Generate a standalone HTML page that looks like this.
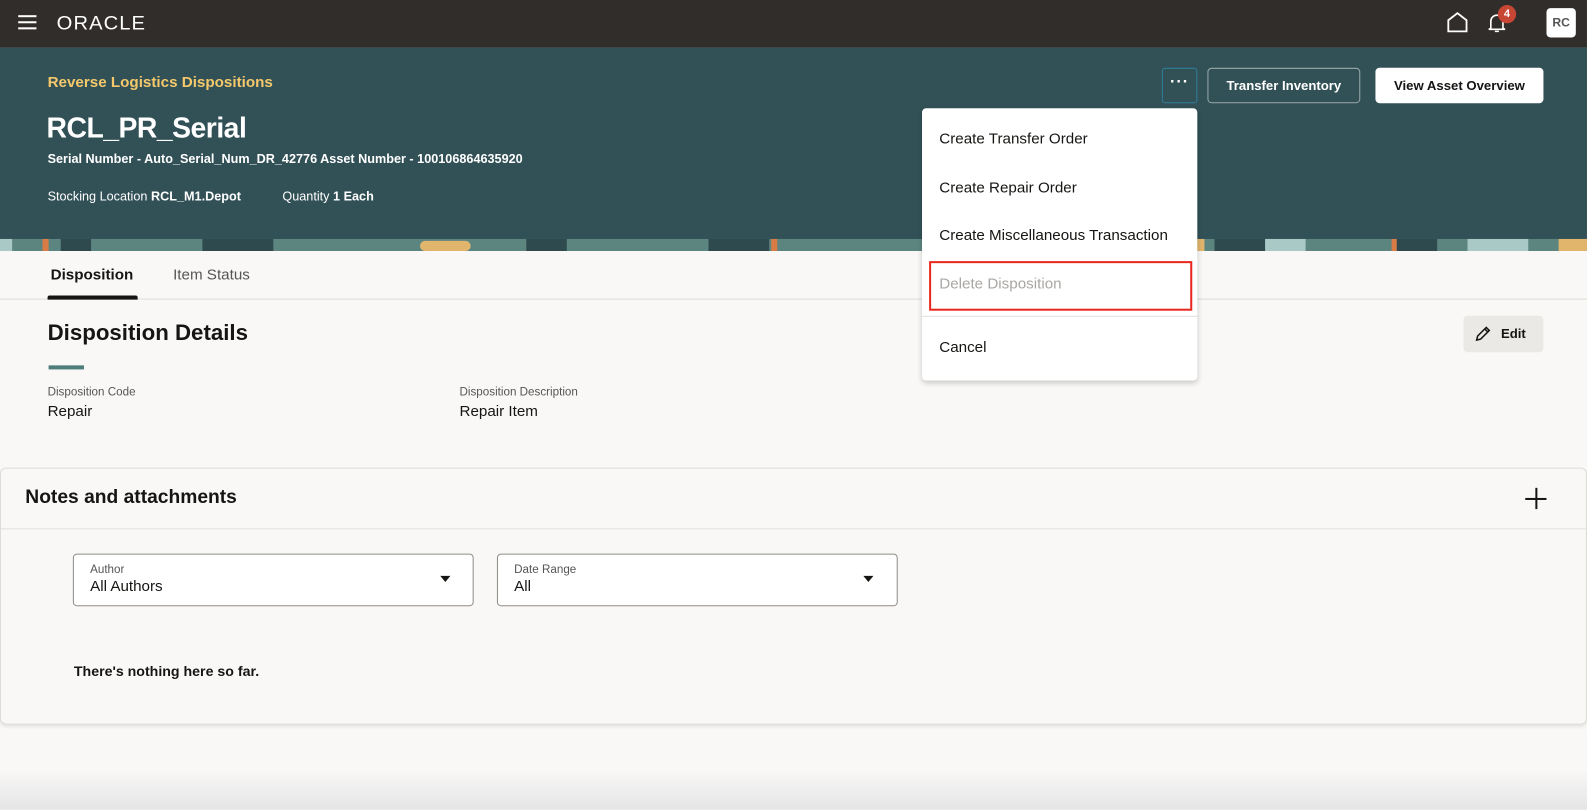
<!DOCTYPE html>
<html><head><style>
*{margin:0;padding:0;box-sizing:border-box}
body{width:1587px;height:810px;overflow:hidden;background:#f9f8f6;font-family:"Liberation Sans",sans-serif;color:#161513;position:relative}
#w{position:absolute;left:0;top:0;width:1568px;height:800px;transform:scale(1.0121);transform-origin:0 0}
.a{position:absolute;white-space:nowrap}
</style></head><body><div id="w">
<div class="a" style="left:0;top:0;width:1568px;height:47px;background:#312d2a"></div>
<div class="a" style="left:18px;top:15px;width:18px;height:2px;background:#fff;box-shadow:0 6px 0 #fff,0 12px 0 #fff"></div>
<div class="a" style="left:56px;top:13px;color:#fff;font-size:19px;letter-spacing:1px;transform:scaleX(1.05);transform-origin:0 0">ORACLE</div>
<svg class="a" style="left:1428px;top:10px" width="24" height="24" viewBox="0 0 24 24"><path d="M3 21V10L12 3l9 7v11z" fill="none" stroke="#fff" stroke-width="1.8"/></svg>
<svg class="a" style="left:1467px;top:10px" width="24" height="24" viewBox="0 0 24 24"><path d="M6 18V11a6 6 0 0112 0v7l2 1H4zM10 21h4" fill="none" stroke="#fff" stroke-width="1.6"/></svg>
<div class="a" style="left:1480px;top:5px;width:18px;height:18px;border-radius:9px;background:#c74634;color:#fff;font-size:11px;font-weight:bold;text-align:center;line-height:18px">4</div>
<div class="a" style="left:1528px;top:8px;width:29px;height:29px;border-radius:4px;background:#fff;color:#555;font-size:12px;font-weight:bold;text-align:center;line-height:29px">RC</div>

<div class="a" style="left:0;top:47px;width:1568px;height:190px;background:#325157"></div>
<svg class="a" style="left:0;top:236px" width="1568" height="12">
<rect width="1568" height="12" fill="#5d8580"/>
<g fill="#2e4a4e"><rect x="60" y="0" width="30" height="12"/><rect x="200" y="0" width="70" height="12"/><rect x="520" y="0" width="40" height="12"/><rect x="700" y="0" width="60" height="12"/><rect x="1200" y="0" width="50" height="12"/><rect x="1380" y="0" width="40" height="12"/></g>
<g fill="#a9c9c6"><rect x="0" y="0" width="12" height="12"/><rect x="1250" y="0" width="40" height="12"/><rect x="1450" y="0" width="60" height="12"/></g>
<g fill="#e1b56b"><rect x="415" y="2" width="50" height="10" rx="5"/><rect x="1005" y="0" width="40" height="12"/><rect x="1180" y="0" width="10" height="12"/><rect x="1540" y="0" width="47" height="12"/></g>
<g fill="#d97b45"><rect x="42" y="0" width="6" height="12"/><rect x="1375" y="0" width="5" height="12"/><rect x="762" y="0" width="6" height="12"/></g>
</svg>
<div class="a" style="left:47px;top:73px;color:#f5c96b;font-size:15px;font-weight:bold">Reverse Logistics Dispositions</div>
<div class="a" style="left:46px;top:111px;color:#fff;font-size:28px;font-weight:bold;letter-spacing:-0.5px">RCL_PR_Serial</div>
<div class="a" style="left:47px;top:150px;color:#fff;font-size:12.5px;font-weight:bold">Serial Number - Auto_Serial_Num_DR_42776 Asset Number - 100106864635920</div>
<div class="a" style="left:47px;top:187px;color:#fff;font-size:12.5px">Stocking Location <b>RCL_M1.Depot</b></div>
<div class="a" style="left:279px;top:187px;color:#fff;font-size:12.5px">Quantity <b>1 Each</b></div>
<div class="a" style="left:1148px;top:67px;width:35px;height:35px;border:1px solid #2f7d9b;border-radius:3px;color:#fff;text-align:center;font-size:16px;line-height:28px;letter-spacing:1px;font-weight:bold">···</div>
<div class="a" style="left:1193px;top:67px;width:151px;height:35px;border:1px solid #9aa8aa;border-radius:4px;color:#fff;text-align:center;font-size:13px;font-weight:bold;line-height:33px">Transfer Inventory</div>
<div class="a" style="left:1359px;top:67px;width:166px;height:35px;background:#fff;border-radius:4px;color:#161513;text-align:center;font-size:13px;font-weight:bold;line-height:35px">View Asset Overview</div>

<div class="a" style="left:0;top:248px;width:1568px;height:48px;border-bottom:1px solid #dedcd8"></div>
<div class="a" style="left:50px;top:263px;font-size:15px;font-weight:bold;color:#161513">Disposition</div>
<div class="a" style="left:47px;top:292px;width:89px;height:4px;background:#161513;border-radius:2px 2px 0 0"></div>
<div class="a" style="left:171px;top:263px;font-size:15px;color:#555">Item Status</div>

<div class="a" style="left:47px;top:316px;font-size:22px;font-weight:bold">Disposition Details</div>
<div class="a" style="left:48px;top:361px;width:35px;height:4px;background:#4e7d7a"></div>
<div class="a" style="left:47px;top:382px;font-size:11.5px;color:#555">Disposition Code</div>
<div class="a" style="left:47px;top:398px;font-size:15px">Repair</div>
<div class="a" style="left:454px;top:382px;font-size:11.5px;color:#555">Disposition Description</div>
<div class="a" style="left:454px;top:398px;font-size:15px">Repair Item</div>
<div class="a" style="left:1446px;top:312px;width:79px;height:36px;background:#ebe9e6;border-radius:4px"></div>
<svg class="a" style="left:1456px;top:321px" width="18" height="18" viewBox="0 0 18 18"><path d="M3 15l1-4L12.5 2.5l3 3L7 14zM11 4l3 3" fill="none" stroke="#161513" stroke-width="1.5"/></svg>
<div class="a" style="left:1483px;top:322px;font-size:13px;font-weight:bold">Edit</div>

<div class="a" style="left:0;top:462px;width:1568px;height:254px;border:1px solid #dedcd8;border-radius:6px;background:#f9f8f6;box-shadow:0 2px 3px rgba(0,0,0,.08)"></div>
<div class="a" style="left:1px;top:522px;width:1567px;height:1px;background:#e2e0dc"></div>
<div class="a" style="left:25px;top:481px;font-size:19px;font-weight:bold">Notes and attachments</div>
<div class="a" style="left:1507px;top:492px;width:21px;height:2px;background:#161513"></div>
<div class="a" style="left:1517px;top:482px;width:2px;height:21px;background:#161513"></div>
<div class="a" style="left:72px;top:547px;width:396px;height:52px;border:1px solid #8f8c88;border-radius:4px;background:#fff"></div>
<div class="a" style="left:89px;top:557px;font-size:11.5px;color:#555">Author</div>
<div class="a" style="left:89px;top:571px;font-size:15px">All Authors</div>
<div class="a" style="left:435px;top:569px;border-left:5px solid transparent;border-right:5px solid transparent;border-top:6px solid #161513"></div>
<div class="a" style="left:491px;top:547px;width:396px;height:52px;border:1px solid #8f8c88;border-radius:4px;background:#fff"></div>
<div class="a" style="left:508px;top:557px;font-size:11.5px;color:#555">Date Range</div>
<div class="a" style="left:508px;top:571px;font-size:15px">All</div>
<div class="a" style="left:853px;top:569px;border-left:5px solid transparent;border-right:5px solid transparent;border-top:6px solid #161513"></div>
<div class="a" style="left:73px;top:655px;font-size:14px;font-weight:bold">There's nothing here so far.</div>

<div class="a" style="left:0;top:760px;width:1568px;height:40px;background:linear-gradient(to bottom,rgba(210,210,215,0),rgba(210,210,215,.5))"></div>

<div class="a" style="left:911px;top:107px;width:272px;height:269px;background:#fff;border-radius:4px;box-shadow:0 2px 6px rgba(0,0,0,.2)"></div>
<div class="a" style="left:928px;top:129px;font-size:15px">Create Transfer Order</div>
<div class="a" style="left:928px;top:177px;font-size:15px">Create Repair Order</div>
<div class="a" style="left:928px;top:224px;font-size:15px">Create Miscellaneous Transaction</div>
<div class="a" style="left:918px;top:258px;width:260px;height:49px;border:2px solid #e8281e"></div>
<div class="a" style="left:928px;top:272px;font-size:15px;color:#a9a7a3">Delete Disposition</div>
<div class="a" style="left:911px;top:312px;width:272px;height:1px;background:#e2e0dc"></div>
<div class="a" style="left:928px;top:335px;font-size:15px">Cancel</div>
</div></body></html>
